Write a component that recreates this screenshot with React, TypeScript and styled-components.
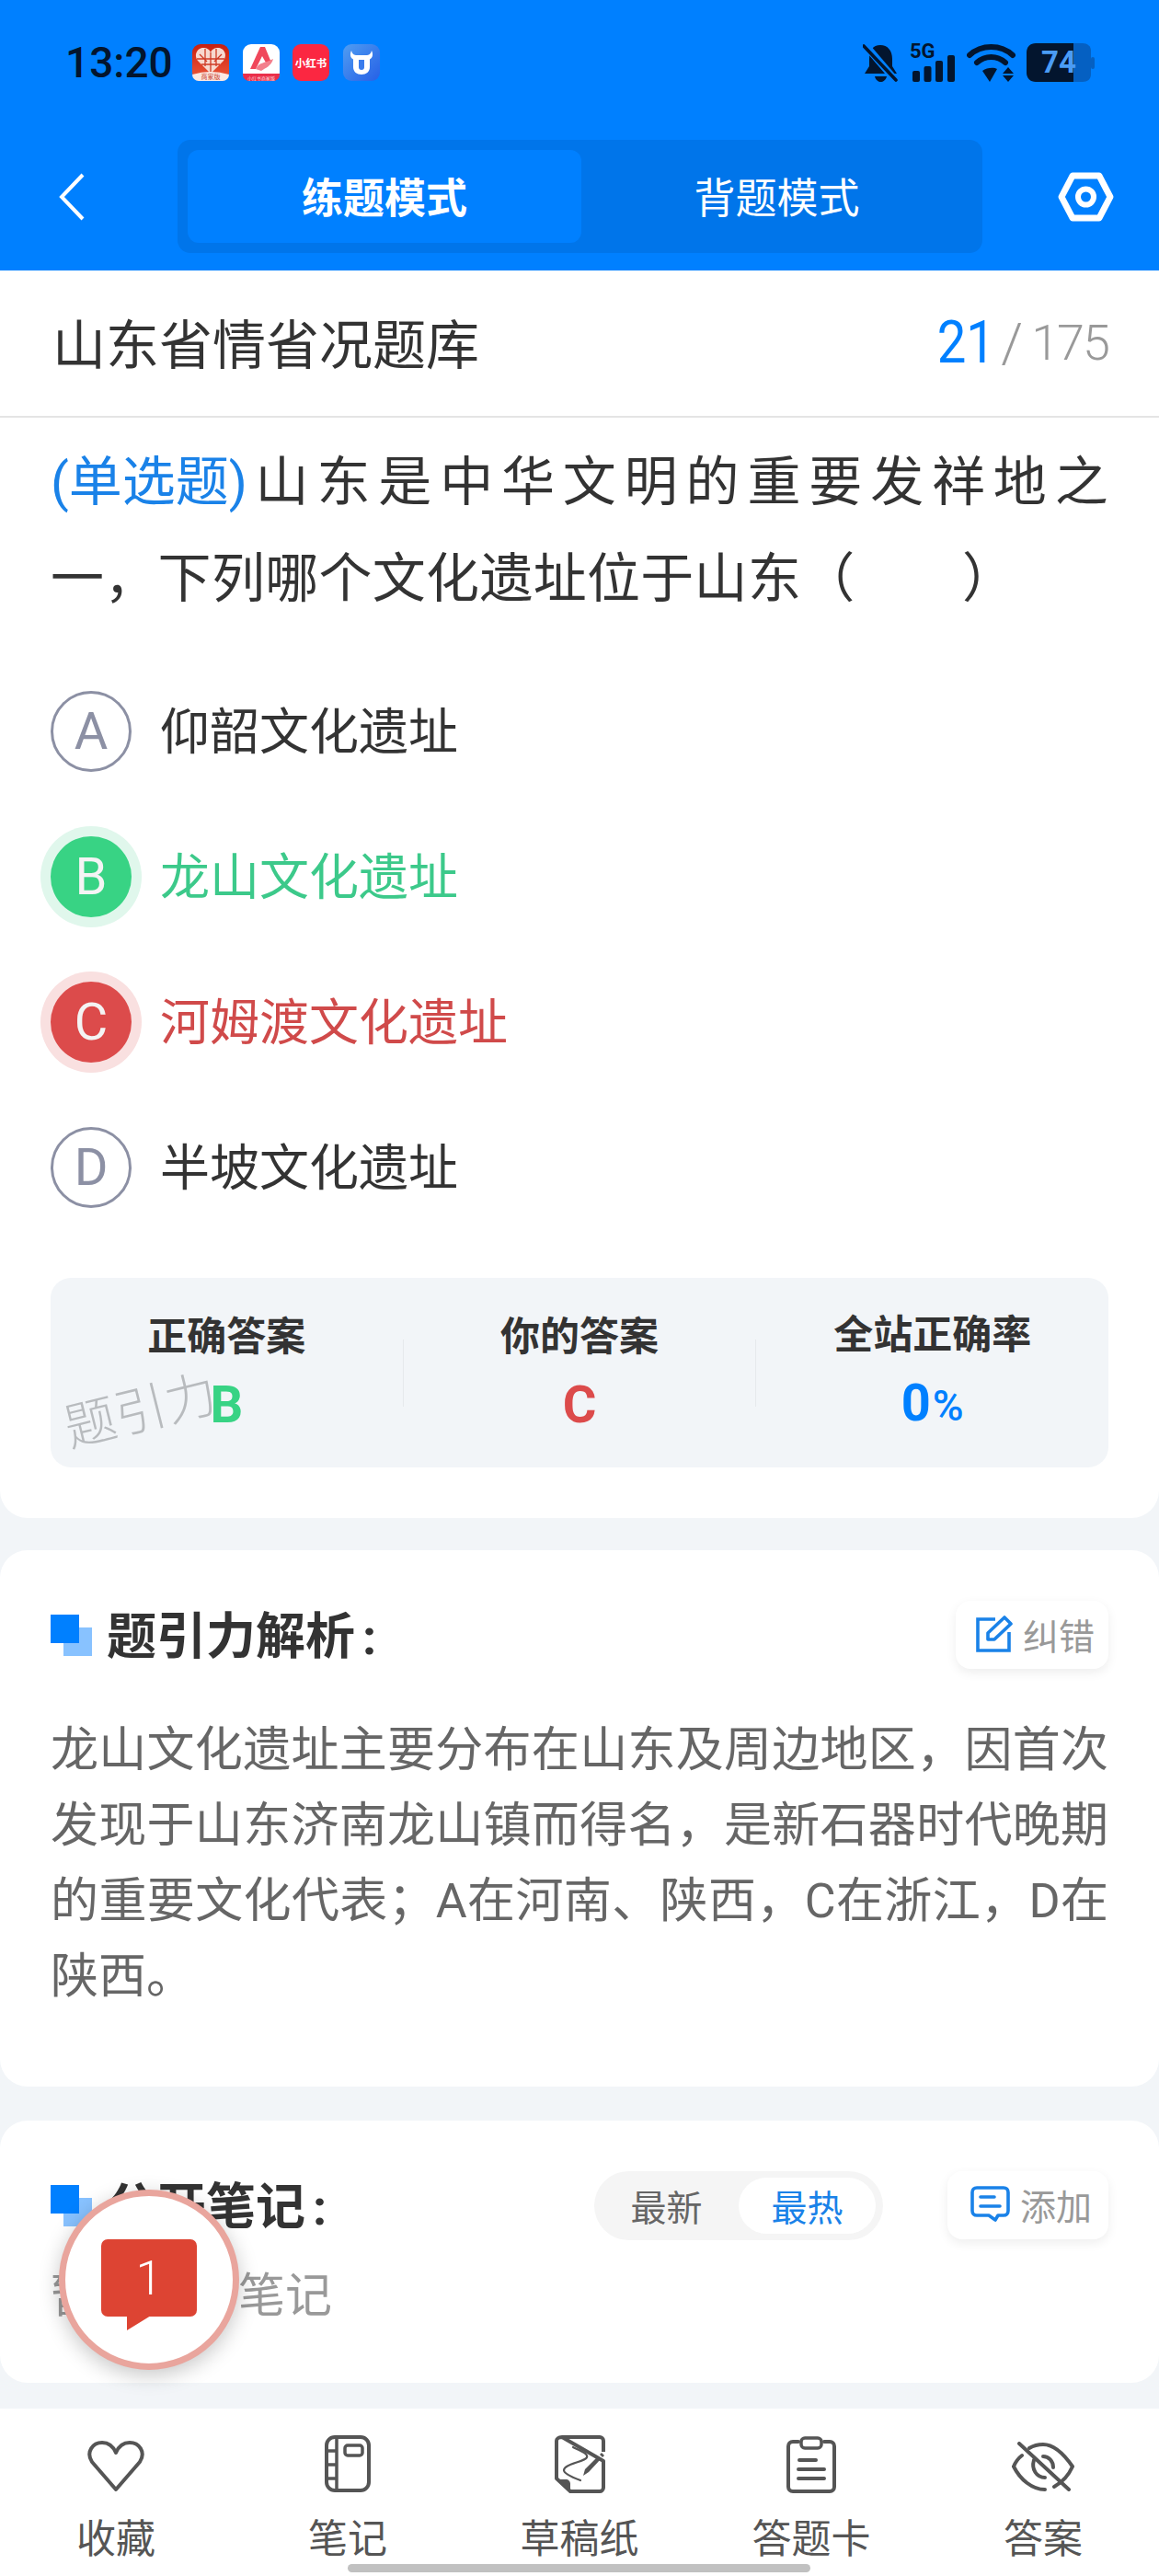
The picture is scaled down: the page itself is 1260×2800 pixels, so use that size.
import styled, { createGlobalStyle } from "styled-components"

const colors = {
  blue: "#0080ff",
  blueDark: "#0075ea",
  ink: "#333333",
  body: "#666666",
  muted: "#999999",
  page: "#f2f5f8",
  navy: "#03152e",
  green: "#38d384",
  greenText: "#3cc98a",
  red: "#dc4b4b",
  redText: "#d04a4a",
  linkBlue: "#1a82e8",
}

const GlobalStyle = createGlobalStyle`
  html, body {
    margin: 0;
    padding: 0;
    background: ${colors.page};
    font-family: Roboto, "Noto Sans CJK SC", sans-serif;
  }
  * {
    box-sizing: border-box;
  }
`

const Page = styled.div`
  position: relative;
  display: flex;
  flex-direction: column;
  width: 1260px;
  height: 2800px;
  overflow: hidden;
  background: ${colors.page};
`

const Header = styled.header`
  flex: none;
  height: 294px;
  background: ${colors.blue};
`

const StatusBar = styled.div`
  display: flex;
  align-items: center;
  height: 136px;
  padding: 0 70px 0 71px;
`

const Time = styled.span`
  width: 116px;
  margin-right: 22px;
  color: ${colors.navy};
  font-size: 46px;
  font-weight: 500;
  white-space: nowrap;
`

const AppIcons = styled.div`
  display: flex;
  gap: 14.5px;
`

const StatusIcons = styled.div`
  display: flex;
  align-items: center;
  gap: 12px;
  margin-left: auto;
`

const Signal = styled.div`
  position: relative;
  width: 50px;
  height: 42px;
`

const FiveG = styled.span`
  position: absolute;
  top: -3px;
  left: 0;
  color: ${colors.navy};
  font-size: 22px;
  font-weight: 700;
  line-height: 24px;
`

const Battery = styled.div`
  position: relative;
  width: 74px;
  height: 42px;
`

const BatteryLevel = styled.span`
  position: absolute;
  top: 0;
  left: 16px;
  color: #4a9cf5;
  font-size: 33px;
  font-weight: 700;
  line-height: 42px;
`

const Nav = styled.nav`
  display: flex;
  align-items: center;
  height: 123px;
  margin-top: 16px;
  padding: 0 49px 0 64px;
`

const Tabs = styled.div`
  display: grid;
  grid-template-columns: 428px 1fr;
  width: 875px;
  height: 123px;
  margin-left: 101px;
  padding: 11px;
  border-radius: 14px;
  background: ${colors.blueDark};
`

const Tab = styled.div<{ $active?: boolean }>`
  display: flex;
  align-items: center;
  justify-content: center;
  padding-bottom: 3px;
  border-radius: 12px;
  background: ${(p) => (p.$active ? colors.blue : "transparent")};
  color: #ffffff;
  font-size: 45px;
  font-weight: ${(p) => (p.$active ? 700 : 400)};
`

const SettingsButton = styled.div`
  display: flex;
  margin-left: auto;
`

const TitleBar = styled.div`
  flex: none;
  display: flex;
  align-items: center;
  justify-content: space-between;
  height: 160px;
  padding: 0 55px 4px 57px;
  border-bottom: 2px solid #e4e4e4;
  background: #ffffff;
`

const BankName = styled.h1`
  margin: 0;
  color: ${colors.ink};
  font-size: 58px;
  font-weight: 400;
`

const Counter = styled.div`
  display: flex;
  align-items: center;
  margin-top: 3px;
  color: ${colors.muted};
  font-size: 54px;
  font-weight: 300;
`

const CounterCurrent = styled.span`
  display: inline-block;
  margin-right: 6px;
  color: ${colors.blue};
  font-size: 64px;
  font-weight: 400;
  transform: scaleX(0.88);
  transform-origin: right center;
`

const CounterSlash = styled.span`
  font-size: 60px;
`

const CounterTotal = styled.span`
  margin-left: 9px;
  letter-spacing: -2px;
`

const QuestionCard = styled.section`
  flex: none;
  padding: 18px 55px 55px;
  border-radius: 0 0 30px 30px;
  background: #ffffff;
`

const QuestionLine = styled.div<{ $spread?: boolean }>`
  color: ${colors.ink};
  font-size: 58px;
  line-height: 105px;
  letter-spacing: 0.3px;
  white-space: ${(p) => (p.$spread ? "normal" : "nowrap")};
  text-align: ${(p) => (p.$spread ? "justify" : "left")};
  text-align-last: ${(p) => (p.$spread ? "justify" : "left")};
`

const QuestionKind = styled.span`
  display: inline-block;
  color: ${colors.linkBlue};
  letter-spacing: 0;
`

const Options = styled.div`
  margin-top: 34px;
`

const OptionRow = styled.div`
  display: flex;
  align-items: center;
  gap: 31px;
  height: 158px;
`

const Badge = styled.span<{ $state: OptionState }>`
  flex: none;
  display: flex;
  align-items: center;
  justify-content: center;
  width: 88px;
  height: 88px;
  border-radius: 50%;
  border: 3px solid ${(p) => (p.$state === "plain" ? "#8c90a4" : "transparent")};
  background: ${(p) => (p.$state === "right" ? colors.green : p.$state === "wrong" ? colors.red : "#ffffff")};
  box-shadow: ${(p) =>
    p.$state === "right" ? "0 0 0 11px #e0f7ec" : p.$state === "wrong" ? "0 0 0 11px #f9e0e0" : "none"};
  color: ${(p) => (p.$state === "plain" ? "#8c90a4" : "#f4f4f4")};
  font-size: 56px;
  font-weight: 400;
`

const OptionText = styled.span<{ $state: OptionState }>`
  margin-bottom: 8px;
  color: ${(p) => (p.$state === "right" ? colors.greenText : p.$state === "wrong" ? colors.redText : colors.ink)};
  font-size: 54px;
`

const Stats = styled.div`
  display: flex;
  align-items: center;
  height: 206px;
  margin-top: 41px;
  border-radius: 22px;
  background: ${colors.page};
`

const StatCell = styled.div`
  position: relative;
  flex: 1;
  display: flex;
  flex-direction: column;
  align-items: center;
  gap: 19px;
`

const StatDivider = styled.span`
  flex: none;
  width: 1px;
  height: 73px;
  background: #e6e9ec;
`

const StatLabel = styled.span`
  color: ${colors.ink};
  font-size: 43px;
  font-weight: 700;
  line-height: 50px;
`

const StatValue = styled.span<{ $color: string }>`
  color: ${(p) => p.$color};
  font-size: 56px;
  font-weight: 700;
  line-height: 60px;
`

const Percent = styled.span`
  margin-left: 2px;
  font-size: 46px;
  font-weight: 500;
`

const Watermark = styled.span`
  position: absolute;
  left: 14px;
  top: 76px;
  color: #b8bbbe;
  font-size: 56px;
  font-weight: 300;
  line-height: 60px;
  white-space: nowrap;
  transform: rotate(-14deg);
`

const Card = styled.section<{ $top: number; $bottom: number }>`
  flex: none;
  margin-top: ${(p) => p.$top}px;
  padding: 55px 55px ${(p) => p.$bottom}px;
  border-radius: 30px;
  background: #ffffff;
`

const CardHead = styled.div`
  display: flex;
  align-items: center;
  height: 74px;
`

const HeadMark = styled.span`
  position: relative;
  flex: none;
  width: 45px;
  height: 45px;
  margin-right: 16px;
  &::before {
    content: "";
    position: absolute;
    left: 14px;
    top: 14px;
    width: 31px;
    height: 31px;
    background: #88c2ff;
  }
  &::after {
    content: "";
    position: absolute;
    left: 0;
    top: 0;
    width: 31px;
    height: 31px;
    background: ${colors.blue};
  }
`

const CardTitle = styled.h2`
  margin: 0 0 5px;
  color: ${colors.ink};
  font-size: 54px;
  font-weight: 700;
  white-space: nowrap;
`

const TitleColon = styled.span`
  margin-left: 8px;
`

const ActionButton = styled.div<{ $wide?: boolean }>`
  flex: none;
  display: flex;
  align-items: center;
  justify-content: center;
  gap: 11px;
  width: ${(p) => (p.$wide ? "175px" : "166px")};
  height: 74px;
  margin-left: ${(p) => (p.$wide ? "70px" : "auto")};
  padding: 0 0 3px 7px;
  border-radius: 16px;
  background: #ffffff;
  box-shadow: 0 4px 12px rgba(0, 0, 0, 0.07);
  color: ${colors.muted};
  font-size: 39px;
`

const Analysis = styled.p`
  margin: 48px 0 0;
  color: ${colors.body};
  font-size: 52px;
  line-height: 82px;
  text-align: justify;
`

const Sort = styled.div`
  display: flex;
  align-items: center;
  width: 314px;
  height: 75px;
  margin-left: auto;
  padding: 0 8px 0 0;
  border-radius: 38px;
  background: #f5f5f5;
  font-size: 39px;
`

const SortItem = styled.span<{ $active?: boolean }>`
  display: flex;
  align-items: center;
  justify-content: center;
  width: ${(p) => (p.$active ? "149px" : "157px")};
  height: 61px;
  border-radius: 31px;
  background: ${(p) => (p.$active ? "#ffffff" : "transparent")};
  color: ${(p) => (p.$active ? colors.linkBlue : colors.body)};
`

const EmptyNote = styled.p`
  margin: 27px 0 0;
  color: ${colors.muted};
  font-size: 51px;
  line-height: 70px;
`

const Footer = styled.footer`
  flex: none;
  display: grid;
  grid-template-columns: repeat(5, 1fr);
  height: 182px;
  margin-top: auto;
  padding-top: 28px;
  background: #ffffff;
`

const FooterItem = styled.div`
  display: flex;
  flex-direction: column;
  align-items: center;
`

const FooterIcon = styled.div<{ $drop?: number }>`
  display: flex;
  align-items: center;
  justify-content: center;
  height: 64px;
  padding-top: ${(p) => p.$drop ?? 0}px;
`

const FooterLabel = styled.span`
  margin-top: 29px;
  color: #555555;
  font-size: 43px;
  line-height: 42px;
`

const HomeBar = styled.span`
  position: absolute;
  left: 378px;
  top: 2787px;
  width: 503px;
  height: 9px;
  border-radius: 5px;
  background: #c1c1c1;
`

const NoteBubble = styled.div`
  position: absolute;
  left: 64px;
  top: 2380px;
  display: flex;
  align-items: center;
  justify-content: center;
  width: 196px;
  height: 196px;
  border: 7px solid #e9a59d;
  border-radius: 50%;
  background: #ffffff;
  box-shadow: 0 6px 22px rgba(0, 0, 0, 0.22);
`

const BubbleShape = styled.div`
  position: relative;
  display: flex;
  align-items: center;
  justify-content: center;
  width: 104px;
  height: 84px;
  margin-bottom: 4px;
  border-radius: 7px;
  background: #dd4433;
  color: #ffffff;
  font-size: 52px;
  font-weight: 300;
  &::after {
    content: "";
    position: absolute;
    left: 28px;
    bottom: -15px;
    width: 0;
    height: 0;
    border-top: 16px solid #dd4433;
    border-right: 26px solid transparent;
  }
`

type OptionState = "plain" | "right" | "wrong"

const options: { key: string; text: string; state: OptionState }[] = [
  { key: "A", text: "仰韶文化遗址", state: "plain" },
  { key: "B", text: "龙山文化遗址", state: "right" },
  { key: "C", text: "河姆渡文化遗址", state: "wrong" },
  { key: "D", text: "半坡文化遗址", state: "plain" },
]

const PinduoduoIcon = () => (
  <svg width="40" height="40" viewBox="0 0 40 40">
    <defs>
      <linearGradient id="pdd" x1="0" y1="0" x2="0" y2="1">
        <stop offset="0" stopColor="#c8200f" />
        <stop offset="1" stopColor="#ee5a3c" />
      </linearGradient>
    </defs>
    <rect width="40" height="40" rx="9" fill="url(#pdd)" />
    <path d="M20 32 L6 18 C1 11 6 4 12 4 C16 4 19 6 20 9 C21 6 24 4 28 4 C34 4 39 11 34 18 Z" fill="#f7d9cf" />
    <path d="M20 9 V32 M8 11 L16 19 M32 11 L24 19 M14 5 L14 24 M26 5 L26 24 M5 16 H35 M10 22 L30 22" stroke="#cf3b26" strokeWidth="1.3" fill="none" />
    <path d="M0 33 Q20 27 40 33 A7 7 0 0 1 33 40 H7 A7 7 0 0 1 0 33 Z" fill="#fbe8e2" />
    <text x="20" y="38" textAnchor="middle" fontSize="7" fill="#c8402c" fontFamily="Noto Sans CJK SC">商家版</text>
  </svg>
)

const MerchantIcon = () => (
  <svg width="40" height="40" viewBox="0 0 40 40">
    <rect width="40" height="40" rx="9" fill="#ffffff" />
    <path d="M0 32 H40 V33 A7 7 0 0 1 33 40 H7 A7 7 0 0 1 0 33 Z" fill="#ea2f4a" />
    <path d="M8 27 L19 3 L24 3 L31 20 L25 20 L21 13 L14 27 Z" fill="#f0475b" />
    <path d="M14 27 C18 19 24 21 33 16 C31 24 24 26 20 29 Z" fill="#f37f8c" />
    <text x="20" y="38.5" textAnchor="middle" fontSize="5" fill="#ffd9de" fontFamily="Noto Sans CJK SC">小红书商家版</text>
  </svg>
)

const RedNoteIcon = () => (
  <svg width="40" height="40" viewBox="0 0 40 40">
    <rect width="40" height="40" rx="9" fill="#fb2741" />
    <text x="20" y="25" textAnchor="middle" fontSize="11.5" fontWeight="700" fill="#ffffff" fontFamily="Noto Sans CJK SC">小红书</text>
  </svg>
)

const CowIcon = () => (
  <svg width="40" height="40" viewBox="0 0 40 40">
    <defs>
      <linearGradient id="cow" x1="0" y1="0" x2="1" y2="1">
        <stop offset="0" stopColor="#4f9df2" />
        <stop offset="1" stopColor="#2660e6" />
      </linearGradient>
    </defs>
    <rect width="40" height="40" rx="9" fill="url(#cow)" />
    <path d="M9 7 C10 11 12 12 15 12 H25 C28 12 30 11 31 7 C33 11 32 15 29 16.5 V25 C29 30 25 33 20 33 C15 33 11 30 11 25 V16.5 C8 15 7 11 9 7 Z" fill="#ffffff" />
    <path d="M17 17 H23 V25 C23 27 22 28 20 28 C18 28 17 27 17 25 Z" fill="#3a7cec" />
  </svg>
)

const BellOffIcon = () => (
  <svg width="39" height="42" viewBox="0 0 39 42">
    <path d="M19 2 C27 2 32 8 32 17 V25 L37 33 H2 L7 25 V17 C7 8 11 2 19 2 Z" fill={colors.navy} />
    <path d="M13 36 H26 C25 40 22 42 19.5 42 C17 42 14 40 13 36 Z" fill={colors.navy} />
    <path d="M1 0 L37 42" stroke={colors.blue} strokeWidth="8" />
    <path d="M1 3 L36 40" stroke={colors.navy} strokeWidth="3.6" strokeLinecap="round" />
  </svg>
)

const SignalBars = () => (
  <svg width="50" height="42" viewBox="0 0 50 42">
    <rect x="3" y="30" width="8" height="12" rx="2" fill={colors.navy} />
    <rect x="15.5" y="25" width="8" height="17" rx="2" fill={colors.navy} />
    <rect x="28" y="19" width="8" height="23" rx="2" fill={colors.navy} />
    <rect x="41" y="13" width="8" height="29" rx="2" fill={colors.navy} />
  </svg>
)

const WifiIcon = () => (
  <svg width="53" height="42" viewBox="0 0 53 42">
    <path d="M3 13 C16 1 37 1 50 13" stroke={colors.navy} strokeWidth="6" fill="none" strokeLinecap="round" />
    <path d="M11 21 C20 13 33 13 42 21" stroke={colors.navy} strokeWidth="6" fill="none" strokeLinecap="round" />
    <path d="M17 30 C22 26 30 26 33 28 L25 42 Z" fill={colors.navy} />
    <path d="M45 26 L51 33 H39 Z M45 42 L51 35 H39 Z" fill={colors.navy} />
  </svg>
)

const BatteryShape = () => (
  <svg width="74" height="42" viewBox="0 0 74 42">
    <path d="M51 0 H61 C66 0 70 3 70 8 V34 C70 39 66 42 61 42 H51 Z" fill="#0560c2" />
    <rect x="70" y="15" width="4" height="13" rx="2" fill="#0560c2" />
    <path d="M51 0 H10 C4 0 0 4 0 10 V32 C0 38 4 42 10 42 H51 Z" fill={colors.navy} />
  </svg>
)

const BackIcon = () => (
  <svg width="28" height="52" viewBox="0 0 28 52">
    <path d="M26 2 L3 26 L26 50" stroke="#ffffff" strokeWidth="4" fill="none" />
  </svg>
)

const SettingsIcon = () => (
  <svg width="61" height="54" viewBox="0 0 61 54">
    <path d="M16 4 H45 L57 27 L45 50 H16 L4 27 Z" stroke="#ffffff" strokeWidth="7" strokeLinejoin="round" fill="none" />
    <circle cx="30.5" cy="27" r="8.5" stroke="#ffffff" strokeWidth="6" fill="none" />
  </svg>
)

const EditIcon = () => (
  <svg width="40" height="40" viewBox="0 0 40 40">
    <path d="M21 4 H2 V38 H36 V18" stroke={colors.linkBlue} strokeWidth="3.6" fill="none" />
    <path d="M13 19 L31 2 L38 9 L20 26 H13 Z" stroke={colors.linkBlue} strokeWidth="3.6" fill="none" strokeLinejoin="round" />
  </svg>
)

const CommentIcon = () => (
  <svg width="43" height="40" viewBox="0 0 43 40">
    <path d="M7 2 H36 C39 2 41 4 41 7 V27 C41 30 39 32 36 32 H30 L27 37 L20 32 H7 C4 32 2 30 2 27 V7 C2 4 4 2 7 2 Z" stroke={colors.linkBlue} strokeWidth="3.6" fill="none" strokeLinejoin="round" />
    <path d="M11 12 H26 M11 22 H32" stroke={colors.linkBlue} strokeWidth="3.6" strokeLinecap="round" />
  </svg>
)

const HeartIcon = () => (
  <svg width="64" height="56" viewBox="0 0 64 56">
    <path d="M32 53 L6 23 C-1 12 7 2 17 2 C24 2 29 6 32 13 C35 6 40 2 47 2 C57 2 65 12 58 23 Z" stroke="#555555" strokeWidth="4" fill="none" strokeLinejoin="round" />
  </svg>
)

const NotebookIcon = () => (
  <svg width="50" height="62" viewBox="0 0 50 62">
    <rect x="2" y="2" width="46" height="58" rx="9" stroke="#555555" strokeWidth="4" fill="none" />
    <path d="M13 2 V60 M2 17 H13 M2 32 H13 M2 47 H13" stroke="#555555" strokeWidth="3.5" fill="none" />
    <rect x="22" y="11" width="19" height="11" rx="3" stroke="#555555" strokeWidth="3.5" fill="none" />
  </svg>
)

const SketchIcon = () => (
  <svg width="55" height="63" viewBox="0 0 55 63">
    <path d="M8 2 H49 C51 2 53 4 53 6 V18 M53 28 V57 C53 59 51 61 49 61 H17 L2 47 V6 C2 4 4 2 8 2 Z" stroke="#555555" strokeWidth="4" fill="none" strokeLinejoin="round" />
    <path d="M3 48 H12 C15 48 17 50 17 53 V61 Z" fill="#555555" />
    <path d="M20 13 C26 16 37 20 35 24 C33 29 10 31 10 38 C10 42 20 46 28 49" stroke="#555555" strokeWidth="2.2" fill="none" strokeLinecap="round" />
    <path d="M47 23 L50 26 L37 40 L31 44 L33 37 Z" fill="#555555" />
    <path d="M49 21 L51 19 L54 22 L52 24 Z" fill="#555555" />
  </svg>
)

const ClipboardIcon = () => (
  <svg width="54" height="62" viewBox="0 0 54 62">
    <path d="M13 6 H7 C4 6 2 8 2 11 V55 C2 58 4 60 7 60 H47 C50 60 52 58 52 55 V11 C52 8 50 6 47 6 H41" stroke="#555555" strokeWidth="4" fill="none" strokeLinecap="round" />
    <rect x="16" y="2" width="22" height="11" rx="4" stroke="#555555" strokeWidth="3.5" fill="none" />
    <path d="M14 26 H32 M13 36 H41 M13 46 H41" stroke="#555555" strokeWidth="4" strokeLinecap="round" />
  </svg>
)

const EyeOffIcon = () => (
  <svg width="68" height="54" viewBox="0 0 68 54">
    <path d="M2 27 C4 22 7 18 11 15 M19 7 C24 4 29 3 34 3 C46 3 57 14 66 27 C62 36 55 44 46 49 M36 52 C22 52 9 41 2 27" stroke="#555555" strokeWidth="4" fill="none" strokeLinecap="round" />
    <path d="M8 2 L62 52" stroke="#555555" strokeWidth="4" strokeLinecap="round" />
    <path d="M24 20 C21 30 27 39 36 39 M34 16 C40 16 45 21 45 28" stroke="#555555" strokeWidth="4" fill="none" strokeLinecap="round" />
  </svg>
)

const footerItems = [
  { label: "收藏", icon: <HeartIcon />, drop: 6 },
  { label: "笔记", icon: <NotebookIcon />, drop: 0 },
  { label: "草稿纸", icon: <SketchIcon />, drop: 0 },
  { label: "答题卡", icon: <ClipboardIcon />, drop: 1 },
  { label: "答案", icon: <EyeOffIcon />, drop: 6 },
]

const App = () => {
  return (
    <Page>
      <GlobalStyle />
      <Header>
        <StatusBar>
          <Time>13:20</Time>
          <AppIcons>
            <PinduoduoIcon />
            <MerchantIcon />
            <RedNoteIcon />
            <CowIcon />
          </AppIcons>
          <StatusIcons>
            <BellOffIcon />
            <Signal>
              <SignalBars />
              <FiveG>5G</FiveG>
            </Signal>
            <WifiIcon />
            <Battery>
              <BatteryShape />
              <BatteryLevel>74</BatteryLevel>
            </Battery>
          </StatusIcons>
        </StatusBar>
        <Nav>
          <BackIcon />
          <Tabs>
            <Tab $active>练题模式</Tab>
            <Tab>背题模式</Tab>
          </Tabs>
          <SettingsButton>
            <SettingsIcon />
          </SettingsButton>
        </Nav>
      </Header>

      <TitleBar>
        <BankName>山东省情省况题库</BankName>
        <Counter>
          <CounterCurrent>21</CounterCurrent>
          <CounterSlash>/</CounterSlash>
          <CounterTotal>175</CounterTotal>
        </Counter>
      </TitleBar>

      <QuestionCard>
        <QuestionLine $spread>
          <QuestionKind>(单选题)</QuestionKind>山东是中华文明的重要发祥地之
        </QuestionLine>
        <QuestionLine>一，下列哪个文化遗址位于山东（　　）</QuestionLine>
        <Options>
          {options.map((o) => (
            <OptionRow key={o.key}>
              <Badge $state={o.state}>{o.key}</Badge>
              <OptionText $state={o.state}>{o.text}</OptionText>
            </OptionRow>
          ))}
        </Options>
        <Stats>
          <StatCell>
            <StatLabel>正确答案</StatLabel>
            <StatValue $color={colors.green}>B</StatValue>
            <Watermark>题引力</Watermark>
          </StatCell>
          <StatDivider />
          <StatCell>
            <StatLabel>你的答案</StatLabel>
            <StatValue $color={colors.red}>C</StatValue>
          </StatCell>
          <StatDivider />
          <StatCell>
            <StatLabel>全站正确率</StatLabel>
            <StatValue $color={colors.blue}>
              0<Percent>%</Percent>
            </StatValue>
          </StatCell>
        </Stats>
      </QuestionCard>

      <Card $top={35} $bottom={78}>
        <CardHead>
          <HeadMark />
          <CardTitle>
            题引力解析<TitleColon>:</TitleColon>
          </CardTitle>
          <ActionButton>
            <EditIcon />
            纠错
          </ActionButton>
        </CardHead>
        <Analysis>
          龙山文化遗址主要分布在山东及周边地区，因首次发现于山东济南龙山镇而得名，是新石器时代晚期的重要文化代表；A在河南、陕西，C在浙江，D在陕西。
        </Analysis>
      </Card>

      <Card $top={37} $bottom={59}>
        <CardHead>
          <HeadMark />
          <CardTitle>
            公开笔记<TitleColon>:</TitleColon>
          </CardTitle>
          <Sort>
            <SortItem>最新</SortItem>
            <SortItem $active>最热</SortItem>
          </Sort>
          <ActionButton $wide>
            <CommentIcon />
            添加
          </ActionButton>
        </CardHead>
        <EmptyNote>暂无公开笔记</EmptyNote>
      </Card>

      <Footer>
        {footerItems.map((item) => (
          <FooterItem key={item.label}>
            <FooterIcon $drop={item.drop}>{item.icon}</FooterIcon>
            <FooterLabel>{item.label}</FooterLabel>
          </FooterItem>
        ))}
      </Footer>

      <NoteBubble>
        <BubbleShape>1</BubbleShape>
      </NoteBubble>
      <HomeBar />
    </Page>
  )
}

export default App
